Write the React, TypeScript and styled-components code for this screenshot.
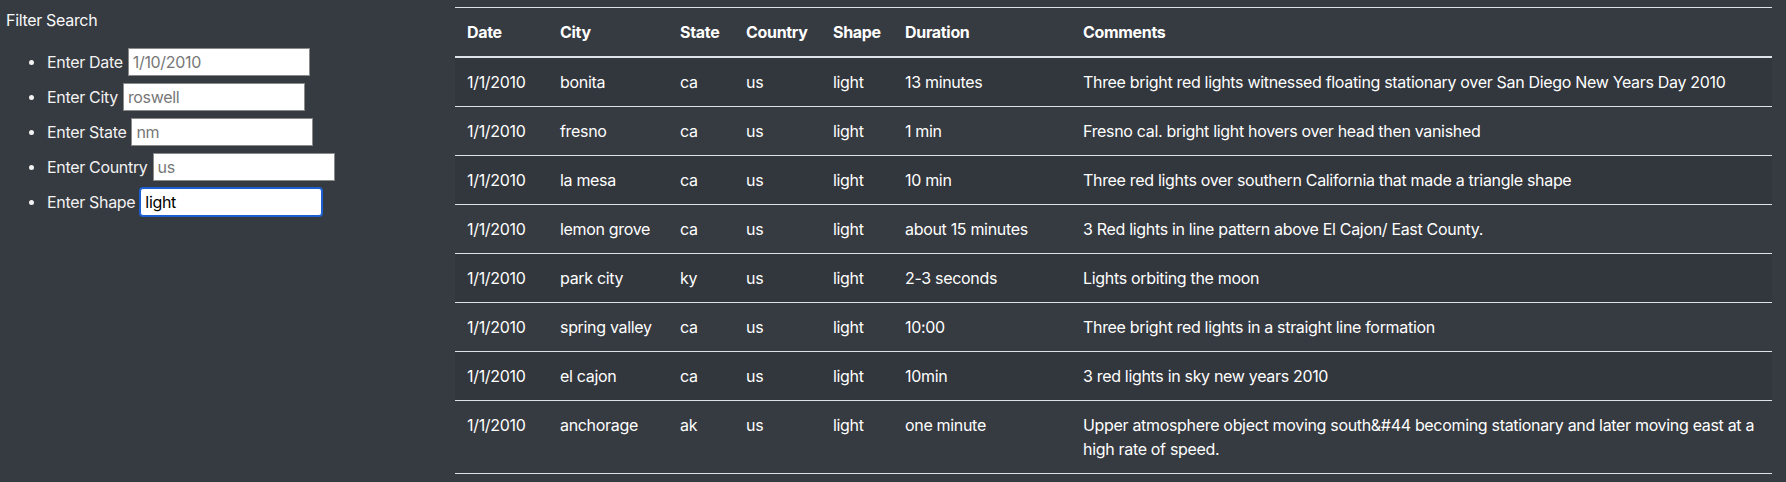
import React from "react";
import styled, { createGlobalStyle, css } from "styled-components";

type Sighting = {
  datetime: string;
  city: string;
  state: string;
  country: string;
  shape: string;
  duration: string;
  comments: string;
};

const sightings: Sighting[] = [
  { datetime: "1/1/2010", city: "bonita", state: "ca", country: "us", shape: "light", duration: "13 minutes", comments: "Three bright red lights witnessed floating stationary over San Diego New Years Day 2010" },
  { datetime: "1/1/2010", city: "fresno", state: "ca", country: "us", shape: "light", duration: "1 min", comments: "Fresno cal. bright light hovers over head then vanished" },
  { datetime: "1/1/2010", city: "la mesa", state: "ca", country: "us", shape: "light", duration: "10 min", comments: "Three red lights over southern California that made a triangle shape" },
  { datetime: "1/1/2010", city: "lemon grove", state: "ca", country: "us", shape: "light", duration: "about 15 minutes", comments: "3 Red lights in line pattern above El Cajon/ East County." },
  { datetime: "1/1/2010", city: "park city", state: "ky", country: "us", shape: "light", duration: "2-3 seconds", comments: "Lights orbiting the moon" },
  { datetime: "1/1/2010", city: "spring valley", state: "ca", country: "us", shape: "light", duration: "10:00", comments: "Three bright red lights in a straight line formation" },
  { datetime: "1/1/2010", city: "el cajon", state: "ca", country: "us", shape: "light", duration: "10min", comments: "3 red lights in sky new years 2010" },
  { datetime: "1/1/2010", city: "anchorage", state: "ak", country: "us", shape: "light", duration: "one minute", comments: "Upper atmosphere object moving south&#44 becoming stationary and later moving east at a high rate of speed." },
];

// ancho de cada columna, tomado de la captura
const columns = [
  { title: "Date", width: 93 },
  { title: "City", width: 120 },
  { title: "State", width: 66 },
  { title: "Country", width: 87 },
  { title: "Shape", width: 72 },
  { title: "Duration", width: 178 },
  { title: "Comments", width: undefined },
];

const GlobalStyle = createGlobalStyle`
  html, body {
    margin: 0;
    padding: 0;
    background: #363a41;
  }
  body {
    font-family: Inter, "Liberation Sans", Arial, sans-serif;
    font-size: 16px;
    line-height: 1.5;
    letter-spacing: -0.02em;
    color: #ffffff;
  }
`;

const Page = styled.div`
  display: flex;
  align-items: flex-start;
  min-height: 482px;
  background: #363a41;
`;

const Sidebar = styled.aside`
  width: 449px;
  flex-shrink: 0;
  padding: 8px 0 0 6px;
`;

const SidebarTitle = styled.div`
  font-size: 16px;
  line-height: 24px;
  color: #f8f9fa;
`;

const FilterList = styled.ul`
  list-style: none;
  margin: 16px 0 0;
  padding: 0 0 0 23px;
`;

const FilterItem = styled.li`
  display: flex;
  align-items: center;
  height: 28px;
  margin-bottom: 7px;
  color: #f2f2f2;
  &::before {
    content: "";
    width: 5px;
    height: 5px;
    border-radius: 50%;
    background: #f2f2f2;
    margin-right: 13px;
  }
`;

const FilterLabel = styled.label`
  margin-right: 5px;
  white-space: nowrap;
`;

const FilterInput = styled.input<{ $focused?: boolean }>`
  box-sizing: border-box;
  width: 182px;
  height: 28px;
  padding: 0 4px;
  border: 1px solid #8a8a8a;
  background: #ffffff;
  color: #000000;
  font-family: inherit;
  font-size: 16px;
  letter-spacing: -0.02em;
  outline: none;
  &::placeholder {
    color: #777777;
  }
  ${(p) =>
    p.$focused &&
    css`
      border-color: #1b5fd1;
      border-radius: 3px;
      box-shadow: 0 0 0 1px #1b5fd1;
    `}
`;

const Main = styled.main`
  flex: 1;
  padding: 7px 14px 0 0;
`;

const Table = styled.table`
  width: 100%;
  table-layout: fixed;
  border-collapse: collapse;
  color: #ffffff;
`;

const HeadCell = styled.th`
  text-align: left;
  font-weight: 700;
  padding: 12px;
  line-height: 24px;
  border-top: 1px solid #dee2e6;
  border-bottom: 2px solid #dee2e6;
`;

const Row = styled.tr<{ $striped: boolean }>`
  background: ${(p) => (p.$striped ? "rgba(0, 0, 0, 0.06)" : "transparent")};
`;

const Cell = styled.td`
  padding: 12px;
  line-height: 24px;
  vertical-align: top;
  border-top: 1px solid #dee2e6;
  white-space: nowrap;
  &:last-child {
    white-space: normal;
  }
`;

const LastLine = styled.tr`
  td {
    border-top: 1px solid #dee2e6;
    padding: 0;
  }
`;

const filters = [
  { label: "Enter Date", placeholder: "1/10/2010" },
  { label: "Enter City", placeholder: "roswell" },
  { label: "Enter State", placeholder: "nm" },
  { label: "Enter Country", placeholder: "us" },
  { label: "Enter Shape", placeholder: "light", value: "light" },
];

export default function App() {
  return (
    <>
      <GlobalStyle />
      <Page>
        <Sidebar>
          <SidebarTitle>Filter Search</SidebarTitle>
          <FilterList>
            {filters.map((f) => (
              <FilterItem key={f.label}>
                <FilterLabel>{f.label}</FilterLabel>
                <FilterInput
                  placeholder={f.placeholder}
                  defaultValue={f.value}
                  $focused={!!f.value}
                />
              </FilterItem>
            ))}
          </FilterList>
        </Sidebar>
        <Main>
          <Table>
            <colgroup>
              {columns.map((c) => (
                <col key={c.title} style={c.width ? { width: c.width } : undefined} />
              ))}
            </colgroup>
            <thead>
              <tr>
                {columns.map((c) => (
                  <HeadCell key={c.title}>{c.title}</HeadCell>
                ))}
              </tr>
            </thead>
            <tbody>
              {sightings.map((s, i) => (
                <Row key={i} $striped={i % 2 === 0}>
                  <Cell>{s.datetime}</Cell>
                  <Cell>{s.city}</Cell>
                  <Cell>{s.state}</Cell>
                  <Cell>{s.country}</Cell>
                  <Cell>{s.shape}</Cell>
                  <Cell>{s.duration}</Cell>
                  <Cell>{s.comments}</Cell>
                </Row>
              ))}
              <LastLine>
                <td colSpan={7} />
              </LastLine>
            </tbody>
          </Table>
        </Main>
      </Page>
    </>
  );
}
